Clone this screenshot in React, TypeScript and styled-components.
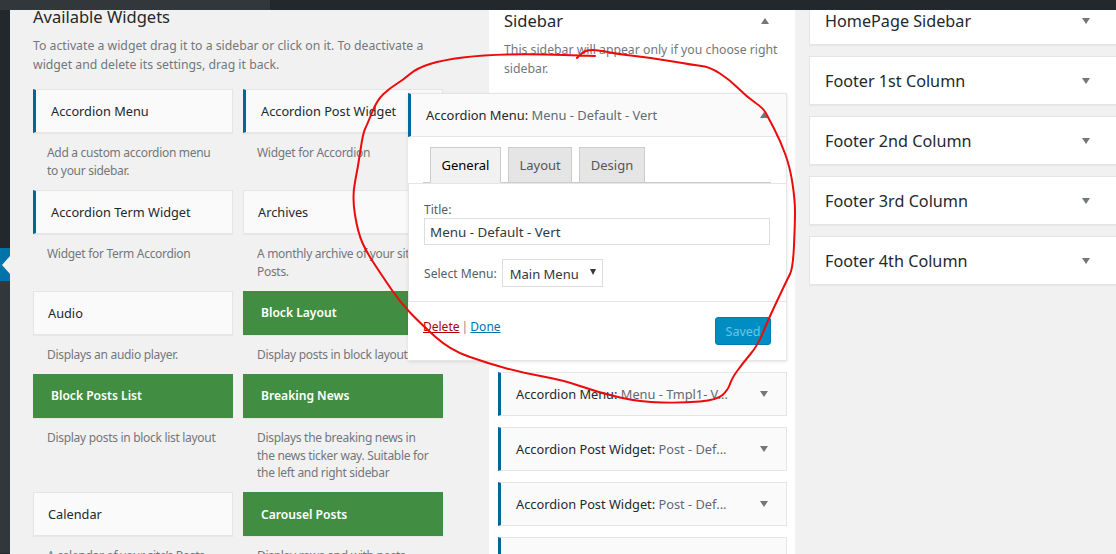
import styled, { createGlobalStyle } from 'styled-components'

// ─── Data ────────────────────────────────────────────────────────────────────
const AVAILABLE = [
  { name: 'Accordion Menu', desc: 'Add a custom accordion menu to your sidebar.', kind: 'plugin' },
  { name: 'Accordion Post Widget', desc: 'Widget for Accordion', kind: 'plugin' },
  { name: 'Accordion Term Widget', desc: 'Widget for Term Accordion', kind: 'plugin' },
  { name: 'Archives', desc: 'A monthly archive of your site\u2019s Posts.', kind: 'core' },
  { name: 'Audio', desc: 'Displays an audio player.', kind: 'core' },
  { name: 'Block Layout', desc: 'Display posts in block layout', kind: 'theme' },
  { name: 'Block Posts List', desc: 'Display posts in block list layout', kind: 'theme' },
  {
    name: 'Breaking News',
    desc: 'Displays the breaking news in the news ticker way. Suitable for the left and right sidebar',
    kind: 'theme',
  },
  { name: 'Calendar', desc: 'A calendar of your site\u2019s Posts.', kind: 'core' },
  { name: 'Carousel Posts', desc: 'Display rows and with posts', kind: 'theme' },
]

const PLACED = [
  { name: 'Accordion Menu:', title: 'Menu - Tmpl1- V...' },
  { name: 'Accordion Post Widget:', title: 'Post - Def...' },
  { name: 'Accordion Post Widget:', title: 'Post - Def...' },
  { name: '', title: '' },
]

const SIDEBARS = ['HomePage Sidebar', 'Footer 1st Column', 'Footer 2nd Column', 'Footer 3rd Column', 'Footer 4th Column']

// hand-drawn annotation, traced from the screenshot
const SCRIBBLE: [number, number][] = [
  [577, 58], [582, 52], [593, 49], [617, 54], [653, 58], [693, 65], [710, 67], [730, 80], [747, 97],
  [763, 108], [768, 117], [780, 140], [790, 167], [795, 200], [795, 223], [793, 268], [787, 280],
  [768, 320], [758, 345], [743, 363], [732, 378], [728, 390], [717, 400], [683, 403], [640, 402],
  [600, 393], [563, 380], [523, 373], [487, 363], [450, 350], [420, 323], [400, 302], [385, 280],
  [367, 253], [358, 233], [352, 197], [358, 167], [363, 133], [367, 125], [377, 100], [390, 88],
  [403, 80], [417, 68], [443, 60], [483, 55], [533, 54], [595, 56],
]

const smoothPath = (pts: [number, number][]) => {
  let d = `M${pts[0][0]} ${pts[0][1]}`
  for (let i = 1; i < pts.length - 1; i++) {
    const mx = (pts[i][0] + pts[i + 1][0]) / 2
    const my = (pts[i][1] + pts[i + 1][1]) / 2
    d += ` Q${pts[i][0]} ${pts[i][1]} ${mx} ${my}`
  }
  const last = pts[pts.length - 1]
  return `${d} L${last[0]} ${last[1]}`
}

// ─── Component ───────────────────────────────────────────────────────────────
const App = () => (
  <Page>
    <GlobalStyle />
    <AdminBar>
      <AdminBarStart />
    </AdminBar>
    <Body>
      <AdminMenu>
        <CollapseTab />
        <MenuRest />
      </AdminMenu>
      <Content>
        <AvailableColumn>
          <Heading>Available Widgets</Heading>
          <Intro>
            To activate a widget drag it to a sidebar or click on it. To deactivate a widget and delete its settings,
            drag it back.
          </Intro>
          <WidgetGrid>
            {AVAILABLE.map(({ name, desc, kind }) => (
              <WidgetCell key={name}>
                <WidgetCard $kind={kind}>{name}</WidgetCard>
                <WidgetDesc>{desc}</WidgetDesc>
              </WidgetCell>
            ))}
          </WidgetGrid>
        </AvailableColumn>

        <SidebarPanel>
          <PanelHeader>
            <Heading>Sidebar</Heading>
            <Arrow $up />
          </PanelHeader>
          <PanelDesc>This sidebar will appear only if you choose right sidebar.</PanelDesc>

          <OpenWidget>
            <OpenHeader>
              <span>
                Accordion Menu: <Muted>Menu - Default - Vert</Muted>
              </span>
              <Arrow $up />
            </OpenHeader>
            <Tabs>
              <Tab $active>General</Tab>
              <Tab>Layout</Tab>
              <Tab>Design</Tab>
            </Tabs>
            <TabPanel>
              <FieldLabel>Title:</FieldLabel>
              <TextInput readOnly value="Menu - Default - Vert" />
              <SelectRow>
                <SelectLabel>Select Menu:</SelectLabel>
                <SelectBox>
                  Main Menu
                  <SelectCaret />
                </SelectBox>
              </SelectRow>
            </TabPanel>
            <OpenFooter>
              <FooterLinks>
                <DeleteLink>Delete</DeleteLink>
                <Pipe> | </Pipe>
                <DoneLink>Done</DoneLink>
              </FooterLinks>
              <SavedButton>Saved</SavedButton>
            </OpenFooter>
          </OpenWidget>

          <PlacedList>
            {PLACED.map(({ name, title }, i) => (
              <PlacedCard key={i}>
                <span>
                  {name} <Muted>{title}</Muted>
                </span>
                {name && <Arrow />}
              </PlacedCard>
            ))}
          </PlacedList>
        </SidebarPanel>

        <SidebarList>
          {SIDEBARS.map((name, i) => (
            <ClosedSidebar key={name} $first={i === 0}>
              {name}
              <Arrow />
            </ClosedSidebar>
          ))}
        </SidebarList>
      </Content>
    </Body>

    <Scribble viewBox="0 0 1116 554" aria-hidden="true">
      <path d={smoothPath(SCRIBBLE)} fill="none" stroke="#ec0a0a" strokeWidth="2" strokeLinecap="round" />
    </Scribble>
  </Page>
)

// ─── Styles ──────────────────────────────────────────────────────────────────
const GlobalStyle = createGlobalStyle`
  html, body { margin: 0; padding: 0; background: #f1f1f1; }
  body { font-family: "Noto Sans", "Open Sans", sans-serif; }
`

const Page = styled.div`
  position: relative;
  width: 1116px;
  height: 554px;
  overflow: hidden;
  display: flex;
  flex-direction: column;
  background: #f1f1f1;
`

const AdminBar = styled.div`
  position: relative;
  z-index: 1;
  flex: 0 0 10px;
  background: #23282d;
`

const AdminBarStart = styled.div`
  width: 270px;
  height: 10px;
  background: #32373c;
`

const Body = styled.div`
  flex: 1;
  display: flex;
  min-height: 0;
`

const AdminMenu = styled.div`
  flex: 0 0 10px;
  display: flex;
  flex-direction: column;
  padding-top: 238px;
  background: #23282d;
`

const CollapseTab = styled.div`
  position: relative;
  flex: none;
  height: 33px;
  background: #0073aa;

  &::after {
    content: '';
    position: absolute;
    left: 2px;
    top: 8px;
    border: 9px solid transparent;
    border-left: 0;
    border-right: 8px solid #f1f1f1;
  }
`

const MenuRest = styled.div`
  flex: none;
  height: 272px;
  background: #32373c;
`

const Content = styled.div`
  flex: 1;
  display: flex;
  min-width: 0;
`

const AvailableColumn = styled.div`
  flex: 0 0 479px;
  margin-top: -4px;
  padding-left: 23px;
  box-sizing: border-box;
`

const Heading = styled.div`
  font-size: 16.5px;
  line-height: 22px;
  color: #23282d;
`

const Intro = styled.p`
  width: 410px;
  margin: 8px 0 15.4px;
  font-size: 12.25px;
  line-height: 19px;
  color: #72777c;
`

const WidgetGrid = styled.div`
  display: grid;
  grid-template-columns: 200px 200px;
  column-gap: 10px;
`

const WidgetCell = styled.div`
  min-width: 0;
`

const WidgetCard = styled.div<{ $kind: string }>`
  box-sizing: border-box;
  height: 44px;
  display: flex;
  align-items: center;
  font-size: ${({ $kind }) => ($kind === 'theme' ? 12.1 : 12.75)}px;
  padding-left: ${({ $kind }) => ({ core: 14, plugin: 15, theme: 17 })[$kind]}px;
  font-weight: ${({ $kind }) => ($kind === 'theme' ? 600 : 400)};
  color: ${({ $kind }) => ($kind === 'theme' ? '#fff' : '#23282d')};
  background: ${({ $kind }) => ($kind === 'theme' ? '#418e42' : '#fafafa')};
  border: 1px solid ${({ $kind }) => ($kind === 'theme' ? '#418e42' : '#e5e5e5')};
  border-left: ${({ $kind }) => ($kind === 'plugin' ? '3px solid #006799' : undefined)};
  box-shadow: 0 1px 1px rgba(0, 0, 0, 0.04);
`

const WidgetDesc = styled.div`
  padding: 11px 11px 10.4px 14px;
  font-size: 12px;
  letter-spacing: -0.3px;
  line-height: 17.65px;
  color: #72777c;
`

const SidebarPanel = styled.div`
  flex: 0 0 306px;
  box-sizing: border-box;
  padding: 0 8px 0 9px;
  background: #fff;
`

const PanelHeader = styled.div`
  display: flex;
  align-items: center;
  justify-content: space-between;
  padding: 0 18px 0 6px;
`

const PanelDesc = styled.p`
  margin: 8px 0 15px;
  padding: 0 0 0 6px;
  font-size: 12.25px;
  line-height: 19px;
  color: #72777c;
`

const Arrow = styled.i<{ $up?: boolean }>`
  flex: none;
  width: 0;
  height: 0;
  border-left: 4.5px solid transparent;
  border-right: 4.5px solid transparent;
  ${({ $up }) => ($up ? 'border-bottom: 6px solid #72777c;' : 'border-top: 6px solid #72777c;')}
`

const OpenWidget = styled.div`
  position: relative;
  z-index: 1;
  margin-left: -90px;
  box-sizing: border-box;
  height: 268px;
  display: flex;
  flex-direction: column;
  background: #fff;
  border-right: 1px solid #e5e5e5;
  box-shadow: 0 1px 3px rgba(0, 0, 0, 0.1);
`

const OpenHeader = styled.div`
  box-sizing: border-box;
  height: 44px;
  flex: none;
  display: flex;
  align-items: center;
  justify-content: space-between;
  padding: 0 18px 0 15px;
  font-size: 12.9px;
  color: #23282d;
  background: #fafafa;
  border: 1px solid #e5e5e5;
  border-left: 3px solid #006799;
  border-right: 0;
`

const Muted = styled.span`
  color: #606a73;
`

const Tabs = styled.div`
  flex: none;
  box-sizing: border-box;
  display: flex;
  align-items: flex-end;
  gap: 7px;
  height: 46px;
  margin: 0 15px;
  padding-left: 7px;
  border-bottom: 1px solid #ccc;
`

const Tab = styled.div<{ $active?: boolean }>`
  box-sizing: border-box;
  height: 36px;
  margin-bottom: -1px;
  padding: 0 10.5px;
  display: flex;
  align-items: center;
  font-size: 13px;
  color: ${({ $active }) => ($active ? '#000' : '#555')};
  background: ${({ $active }) => ($active ? '#f1f1f1' : '#e5e5e5')};
  border: 1px solid #ccc;
  ${({ $active }) => $active && 'border-bottom-color: #f1f1f1;'}
`

const TabPanel = styled.div`
  flex: none;
  box-sizing: border-box;
  height: 119px;
  padding: 17px 15px 0;
  border: 1px solid #e5e5e5;
  border-right: 0;
`

const FieldLabel = styled.div`
  font-size: 12.1px;
  line-height: 17px;
  color: #555d66;
`

const TextInput = styled.input`
  display: block;
  box-sizing: border-box;
  width: 346px;
  height: 27px;
  padding: 0 5px;
  font: 13.4px "Noto Sans", sans-serif;
  color: #32373c;
  background: #fff;
  border: 1px solid #ddd;
  outline: none;
`

const SelectRow = styled.div`
  display: flex;
  align-items: center;
  gap: 5px;
  margin-top: 14px;
`

const SelectLabel = styled.span`
  padding-top: 1px;
  font-size: 12.1px;
  color: #555d66;
`

const SelectBox = styled.div`
  box-sizing: border-box;
  width: 101px;
  height: 28px;
  display: flex;
  align-items: center;
  justify-content: space-between;
  padding: 1px 6px 0 7px;
  font-size: 13px;
  color: #32373c;
  border: 1px solid #ddd;
`

const SelectCaret = styled.i`
  width: 0;
  height: 0;
  margin-bottom: 3px;
  border-left: 3.5px solid transparent;
  border-right: 3.5px solid transparent;
  border-top: 6px solid #32373c;
`

const OpenFooter = styled.div`
  flex: 1;
  display: flex;
  align-items: flex-start;
  justify-content: space-between;
  padding: 15px 15px 0;
  font-size: 12px;
  border-bottom: 1px solid #e5e5e5;
`

const FooterLinks = styled.span`
  margin-top: 1px;
`

const DeleteLink = styled.a`
  color: #a00;
  text-decoration: underline;
`

const DoneLink = styled.a`
  color: #0073aa;
  text-decoration: underline;
`

const Pipe = styled.span`
  margin: 0 -1px;
  color: #82878c;
`

const SavedButton = styled.div`
  box-sizing: border-box;
  width: 56px;
  height: 28px;
  display: flex;
  align-items: center;
  justify-content: center;
  font-size: 12.5px;
  color: #66c6e4;
  background: #008ec2;
  border: 1px solid #007cb2;
  border-radius: 3px;
`

const PlacedList = styled.div`
  margin-top: 11px;
  display: flex;
  flex-direction: column;
  gap: 11px;
`

const PlacedCard = styled.div`
  box-sizing: border-box;
  height: 44px;
  flex: none;
  display: flex;
  align-items: center;
  justify-content: space-between;
  padding: 0 18px 0 15px;
  font-size: 12.8px;
  color: #23282d;
  background: #fafafa;
  border: 1px solid #e5e5e5;
  border-left: 3px solid #006799;
`

const SidebarList = styled.div`
  flex: 1;
  padding-left: 14px;
  display: flex;
  flex-direction: column;
  gap: 11px;
`

const ClosedSidebar = styled.div<{ $first: boolean }>`
  box-sizing: border-box;
  height: ${({ $first }) => ($first ? 35 : 49)}px;
  flex: none;
  display: flex;
  align-items: ${({ $first }) => ($first ? 'flex-start' : 'center')};
  justify-content: space-between;
  padding: 0 26px 0 15px;
  font-size: 16.2px;
  line-height: 22px;
  color: #23282d;
  background: #fff;
  border: 1px solid #e5e5e5;
  border-top-width: ${({ $first }) => ($first ? 0 : 1)}px;
  border-right: 0;
  box-shadow: 0 1px 1px rgba(0, 0, 0, 0.04);

  i { ${({ $first }) => $first && 'margin-top: 8px;'} }
`

const Scribble = styled.svg`
  position: absolute;
  inset: 0;
  width: 1116px;
  height: 554px;
  z-index: 2;
  pointer-events: none;
`

export default App
